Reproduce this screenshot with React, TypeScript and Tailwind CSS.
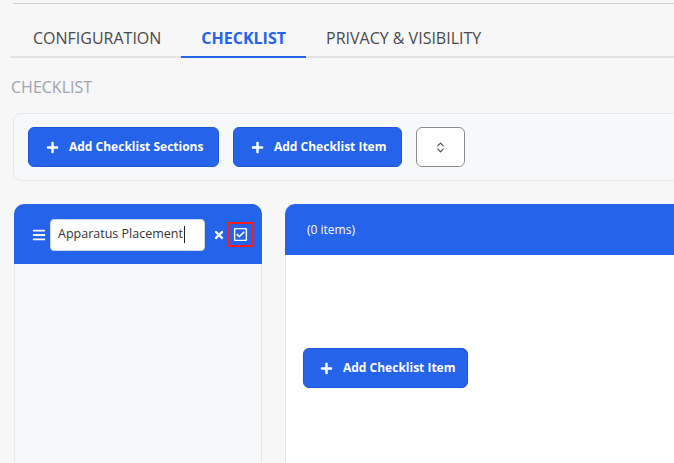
import React from 'react';
import { FaBars, FaTimes, FaRegCheckSquare, FaPlus } from 'react-icons/fa';
import { LuChevronsUpDown } from 'react-icons/lu';

const tabs = [
    { label: 'CONFIGURATION', active: false },
    { label: 'CHECKLIST', active: true },
    { label: 'PRIVACY & VISIBILITY', active: false },
];

const AddButton: React.FC<{ label: string; className?: string }> = ({ label, className }) => (
    <button className={`h-[40px] flex items-center bg-[#2563eb] text-white rounded-md border border-[#1f56d6] text-[12px] font-bold ${className ?? ''}`}>
        <FaPlus className="w-[13px] h-[13px] mr-[10px]" />
        <span>{label}</span>
    </button>
);

const App: React.FC = () => {
    return (
        <div className="w-[674px] h-[463px] overflow-hidden bg-[#f7f7f7] font-['Open_Sans',sans-serif]">
            <div className="pt-[3px] pl-[13px]">
                <div className="border-t border-[#d0d0d0]" />
            </div>

            {/* tabs */}
            <div className="ml-[10px] pl-[3px] flex border-b-2 border-[#e2e2e2]">
                {tabs.map(tab => (
                    <div
                        key={tab.label}
                        className={`px-5 pt-[22px] pb-[6px] text-[16px] leading-6 -mb-[2px] border-b-2 ${tab.active ? 'border-[#2563eb] text-[#2563eb] font-bold' : 'border-transparent text-[#4a4a4a]'}`}
                    >
                        {tab.label}
                    </div>
                ))}
            </div>

            <h3 className="mt-[17px] ml-[11px] text-[16px] leading-6 text-[#9ea3ad]">CHECKLIST</h3>

            {/* toolbar */}
            <div className="mt-[14px] ml-[13px] -mr-[20px] bg-[#f7f8fa] border border-[#e6e7ea] rounded-lg pl-[14px] py-[13px] flex items-center gap-[14px]">
                <AddButton label="Add Checklist Sections" className="w-[191px] pl-[17px]" />
                <AddButton label="Add Checklist Item" className="w-[169px] pl-[17px]" />
                <button className="w-[49px] h-[40px] bg-white border border-[#8c8c8c] rounded-md flex items-center justify-center text-[#444]">
                    <LuChevronsUpDown className="w-[13px] h-[13px]" />
                </button>
            </div>

            {/* sections */}
            <div className="mt-[23px] flex items-start gap-[23px] h-[260px]">
                <div className="ml-[14px] w-[248px] h-full flex flex-col">
                    <div className="h-[60px] bg-[#2563eb] rounded-t-[10px] flex items-center pl-[18px] pt-[1px]">
                        <FaBars className="w-[14px] h-[14px] text-white" />
                        <div className="ml-[4px] w-[155px] h-[32px] bg-white rounded-[4px] border border-[#cfd6e4] flex items-center pl-[7px] text-[12.5px] text-[#333]">
                            <span>Apparatus Placement</span>
                            <span className="w-px h-[17px] bg-[#222] ml-px" />
                        </div>
                        <FaTimes className="ml-[8px] w-[12px] h-[12px] text-white" />
                        <div className="ml-[3px] w-[25px] h-[25px] border-2 border-[#ff1a1a] flex items-center justify-center">
                            <FaRegCheckSquare className="w-[15px] h-[15px] text-white" />
                        </div>
                    </div>
                    <div className="flex-1 bg-[#f7f8fa] border-x border-[#e6e7ea]" />
                </div>

                <div className="flex-1 h-full flex flex-col">
                    <div className="h-[51px] bg-[#2563eb] rounded-tl-[10px] flex items-center pl-[22px] text-[12px] text-white">
                        (0 items)
                    </div>
                    <div className="flex-1 bg-white border-l border-[#e6e7ea] pl-[17px] pt-[93px]">
                        <AddButton label="Add Checklist Item" className="w-[165px] pl-[16px]" />
                    </div>
                </div>
            </div>
        </div>
    );
};

export default App;
